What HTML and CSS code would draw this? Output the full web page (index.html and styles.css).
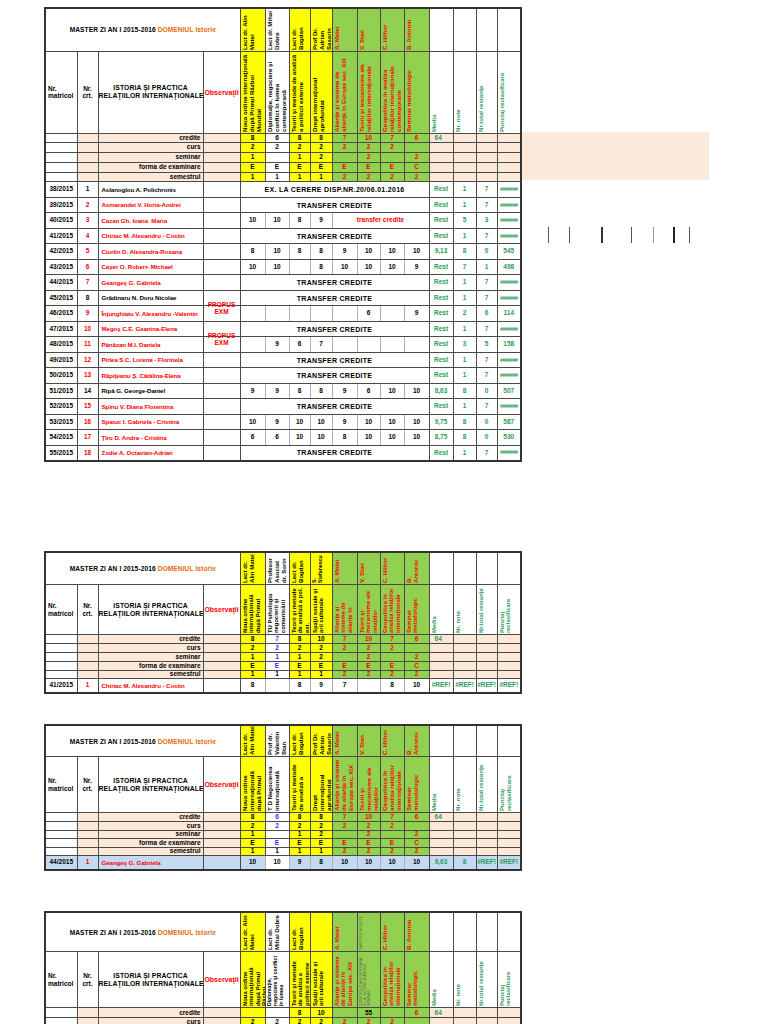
FILE: index.html
```html
<!DOCTYPE html>
<html lang="ro">
<head>
<meta charset="utf-8">
<title>Master ZI An I 2015-2016</title>
<link rel="stylesheet" href="styles.css">
</head>
<body>
<div class="page">

<div class="first">
<table class="sheet t1">
<colgroup>
<col class="w32"><col class="w21"><col class="w105"><col class="w37">
<col class="w25"><col class="w24"><col class="w21"><col class="w22">
<col class="w25"><col class="w23"><col class="w24"><col class="w25">
<col class="w24"><col class="w23"><col class="w21"><col class="w24">
</colgroup>
<tr class="hr1">
<td colspan="4" class="title">MASTER ZI AN I 2015-2016 <span class="or">DOMENIUL Istorie</span></td>
<td class="y hb"><div class="rot">Lect dr. Alin Matei</div></td>
<td class="hb"><div class="rot">Lect dr. Mihai Dobre</div></td>
<td class="y hb"><div class="rot">Lect dr. Bogdan</div></td>
<td class="y hb"><div class="rot">Prof Dr. Adrian Sasarin</div></td>
<td class="g hb r"><div class="rot">A. Matei</div></td>
<td class="g hb r"><div class="rot">V. Stan</div></td>
<td class="g hb r"><div class="rot">C. Hlihor</div></td>
<td class="g hb r"><div class="rot">B. Antoniu</div></td>
<td></td><td></td><td></td><td></td>
</tr>
<tr class="hr2">
<td class="lbl-l">Nr.<br>matricol</td>
<td class="lbl">Nr.<br>crt.</td>
<td class="big">ISTORIA ŞI PRACTICA<br>RELAŢIILOR INTERNAŢIONALE</td>
<td class="obs-h">Observaţii</td>
<td class="y hb"><div class="rot">Noua ordine internaţională după Primul Război Mondial</div></td>
<td class="hb"><div class="rot">Diplomaţie, negociere şi conflict în lumea contemporană</div></td>
<td class="y hb"><div class="rot">Teorii şi metode de analiză a politicii externe</div></td>
<td class="y hb"><div class="rot">Drept internaţional aprofundat</div></td>
<td class="g hb r"><div class="rot">Alianţe şi sisteme de alianţe în Europa sec. XIX</div></td>
<td class="g hb r"><div class="rot">Teorii şi mecanisme ale relaţiilor internaţionale</div></td>
<td class="g hb r"><div class="rot">Geopolitica în analiza relaţiilor internaţionale contemporane</div></td>
<td class="g hb r"><div class="rot">Seminar metodologic</div></td>
<td class="hb gt"><div class="rot">Media</div></td>
<td class="hb gt"><div class="rot">Nr. note</div></td>
<td class="hb gt"><div class="rot">Nr.total restanţe</div></td>
<td class="hb gt"><div class="rot">Punctaj reclasificare</div></td>
</tr>
<tr class="cr"><td></td><td class="p"></td><td class="p cl">credite</td><td class="p"></td>
<td class="y">8</td><td>6</td><td class="y">8</td><td class="y">8</td><td class="g r">7</td><td class="g r">10</td><td class="g r">7</td><td class="g r">6</td>
<td class="p gt ml">64</td><td class="p"></td><td class="p"></td><td class="p"></td></tr>
<tr class="cr"><td></td><td class="p"></td><td class="p cl">curs</td><td class="p"></td>
<td class="y">2</td><td>2</td><td class="y">2</td><td class="y">2</td><td class="g r">2</td><td class="g r">2</td><td class="g r">2</td><td class="g r"></td>
<td class="p"></td><td class="p"></td><td class="p"></td><td class="p"></td></tr>
<tr class="cr"><td></td><td class="p"></td><td class="p cl">seminar</td><td class="p"></td>
<td class="y">1</td><td></td><td class="y">1</td><td class="y">2</td><td class="g r"></td><td class="g r">2</td><td class="g r"></td><td class="g r">2</td>
<td class="p"></td><td class="p"></td><td class="p"></td><td class="p"></td></tr>
<tr class="cr"><td></td><td class="p"></td><td class="p cl">forma de examinare</td><td class="p"></td>
<td class="y">E</td><td>E</td><td class="y">E</td><td class="y">E</td><td class="g r">E</td><td class="g r">E</td><td class="g r">E</td><td class="g r">C</td>
<td class="p"></td><td class="p"></td><td class="p"></td><td class="p"></td></tr>
<tr class="cr"><td></td><td class="p"></td><td class="p cl">semestrul</td><td class="p"></td>
<td class="y">1</td><td>1</td><td class="y">1</td><td class="y">1</td><td class="g r">2</td><td class="g r">2</td><td class="g r">2</td><td class="g r">2</td>
<td class="p"></td><td class="p"></td><td class="p"></td><td class="p"></td></tr>

<tr class="dr"><td>38/2015</td><td>1</td><td class="name">Aslanoglou A. Polichronis</td><td></td><td colspan="8" class="tc">EX. LA CERERE DISP.NR.20/06.01.2016</td><td class="gt">Rest</td><td class="gt">1</td><td class="gt">7</td><td class="gt hash">########</td></tr>
<tr class="dr"><td>39/2015</td><td class="r">2</td><td class="name r">Asmarandei V. Horia-Andrei</td><td></td><td colspan="8" class="tc">TRANSFER CREDITE</td><td class="gt">Rest</td><td class="gt">1</td><td class="gt">7</td><td class="gt hash">########</td></tr>
<tr class="dr"><td>40/2015</td><td class="r">3</td><td class="name r">Cazan Gh. Ioana &nbsp;Maria</td><td></td><td class="c">10</td><td class="c">10</td><td class="c">8</td><td class="c">9</td><td colspan="4" class="tc r small">transfer credite</td><td class="gt">Rest</td><td class="gt">5</td><td class="gt">3</td><td class="gt hash">########</td></tr>
<tr class="dr"><td>41/2015</td><td class="r">4</td><td class="name r">Chiriac M. Alexandru - Costin</td><td></td><td colspan="8" class="tc">TRANSFER CREDITE</td><td class="gt">Rest</td><td class="gt">1</td><td class="gt">7</td><td class="gt hash">########</td></tr>
<tr class="dr"><td>42/2015</td><td class="r">5</td><td class="name r">Ciurlin D. Alexandra-Roxana</td><td></td><td class="c">8</td><td class="c">10</td><td class="c">8</td><td class="c">8</td><td class="c">9</td><td class="c">10</td><td class="c">10</td><td>10</td><td class="gt">9,13</td><td class="gt">8</td><td class="gt">0</td><td class="gt">545</td></tr>
<tr class="dr"><td>43/2015</td><td class="r">6</td><td class="name r">Cayer O. Robert- Michael</td><td></td><td class="c">10</td><td class="c">10</td><td class="c"></td><td class="c">8</td><td class="c">10</td><td class="c">10</td><td class="c">10</td><td>9</td><td class="gt">Rest</td><td class="gt">7</td><td class="gt">1</td><td class="gt">498</td></tr>
<tr class="dr"><td>44/2015</td><td class="r">7</td><td class="name r">Geangeş G. Gabriela</td><td></td><td colspan="8" class="tc">TRANSFER CREDITE</td><td class="gt">Rest</td><td class="gt">1</td><td class="gt">7</td><td class="gt hash">########</td></tr>
<tr class="dr"><td>45/2015</td><td>8</td><td class="name">Grădinaru N. Doru Nicolae</td><td></td><td colspan="8" class="tc">TRANSFER CREDITE</td><td class="gt">Rest</td><td class="gt">1</td><td class="gt">7</td><td class="gt hash">########</td></tr>
<tr class="dr"><td>46/2015</td><td class="r">9</td><td class="name r">Înjunghiatu V. Alexandru -Valentin</td><td class="obs r"><div class="prop">PROPUS<br>EXM</div></td><td class="c"></td><td class="c"></td><td class="c"></td><td class="c"></td><td class="c"></td><td class="c">6</td><td class="c"></td><td>9</td><td class="gt">Rest</td><td class="gt">2</td><td class="gt">6</td><td class="gt">114</td></tr>
<tr class="dr"><td>47/2015</td><td class="r">10</td><td class="name r">Megoş C.E. Geanina-Elena</td><td></td><td colspan="8" class="tc">TRANSFER CREDITE</td><td class="gt">Rest</td><td class="gt">1</td><td class="gt">7</td><td class="gt hash">########</td></tr>
<tr class="dr"><td>48/2015</td><td class="r">11</td><td class="name r">Pânăzan M.I. Daniela</td><td class="obs r"><div class="prop">PROPUS<br>EXM</div></td><td class="c"></td><td class="c">9</td><td class="c">6</td><td class="c">7</td><td class="c"></td><td class="c"></td><td class="c"></td><td></td><td class="gt">Rest</td><td class="gt">3</td><td class="gt">5</td><td class="gt">158</td></tr>
<tr class="dr"><td>49/2015</td><td class="r">12</td><td class="name r">Pîrlea S.C. Lorena - Florinela</td><td></td><td colspan="8" class="tc">TRANSFER CREDITE</td><td class="gt">Rest</td><td class="gt">1</td><td class="gt">7</td><td class="gt hash">########</td></tr>
<tr class="dr"><td>50/2015</td><td class="r">13</td><td class="name r">Răpiţeanu Ş. Cătălina-Elena</td><td></td><td colspan="8" class="tc">TRANSFER CREDITE</td><td class="gt">Rest</td><td class="gt">1</td><td class="gt">7</td><td class="gt hash">########</td></tr>
<tr class="dr"><td>51/2015</td><td>14</td><td class="name">Ripă G. George-Daniel</td><td></td><td class="c">9</td><td class="c">9</td><td class="c">8</td><td class="c">8</td><td class="c">9</td><td class="c">6</td><td class="c">10</td><td>10</td><td class="gt">8,63</td><td class="gt">8</td><td class="gt">0</td><td class="gt">507</td></tr>
<tr class="dr"><td>52/2015</td><td class="r">15</td><td class="name r">Spînu V. Diana Florentina</td><td></td><td colspan="8" class="tc">TRANSFER CREDITE</td><td class="gt">Rest</td><td class="gt">1</td><td class="gt">7</td><td class="gt hash">########</td></tr>
<tr class="dr"><td>53/2015</td><td class="r">16</td><td class="name r">Spaiuc I. Gabriela - Cristina</td><td></td><td class="c">10</td><td class="c">9</td><td class="c">10</td><td class="c">10</td><td class="c">9</td><td class="c">10</td><td class="c">10</td><td>10</td><td class="gt">9,75</td><td class="gt">8</td><td class="gt">0</td><td class="gt">587</td></tr>
<tr class="dr"><td>54/2015</td><td class="r">17</td><td class="name r">Ţîru D. Andra - Cristina</td><td></td><td class="c">6</td><td class="c">6</td><td class="c">10</td><td class="c">10</td><td class="c">8</td><td class="c">10</td><td class="c">10</td><td>10</td><td class="gt">8,75</td><td class="gt">8</td><td class="gt">0</td><td class="gt">530</td></tr>
<tr class="dr"><td>55/2015</td><td class="r">18</td><td class="name r">Zodie A. Octavian-Adrian</td><td></td><td colspan="8" class="tc">TRANSFER CREDITE</td><td class="gt">Rest</td><td class="gt">1</td><td class="gt">7</td><td class="gt hash">########</td></tr>
</table>

<div class="side">
<div class="side-gap"></div>
<div class="band"></div>
<div class="ticks"><span class="tick"></span><span class="tick"></span><span class="tick"></span><span class="tick"></span><span class="tick"></span><span class="tick"></span><span class="tick"></span></div>
</div>
</div>

<table class="sheet t2">
<colgroup>
<col class="w32"><col class="w21"><col class="w105"><col class="w37">
<col class="w25"><col class="w24"><col class="w21"><col class="w22">
<col class="w25"><col class="w23"><col class="w24"><col class="w25">
<col class="w24"><col class="w23"><col class="w21"><col class="w24">
</colgroup>
<tr class="hr1">
<td colspan="4" class="title">MASTER ZI AN I 2015-2016 <span class="or">DOMENIUL Istorie</span></td>
<td class="y hb"><div class="rot">Lect dr. Alin Matei</div></td>
<td class="hb"><div class="rot">Profesor Asociat dr. Sorin</div></td>
<td class="y hb"><div class="rot">Lect dr. Bogdan</div></td>
<td class="y hb fit"><div class="rot">S. Stefanescu</div></td>
<td class="g hb r"><div class="rot">A. Matei</div></td>
<td class="g hb r"><div class="rot">V. Stan</div></td>
<td class="g hb r"><div class="rot">C. Hlihor</div></td>
<td class="g hb r"><div class="rot">B. Antoniu</div></td>
<td></td><td></td><td></td><td></td>
</tr>
<tr class="hr2">
<td class="lbl-l">Nr.<br>matricol</td>
<td class="lbl">Nr.<br>crt.</td>
<td class="big">ISTORIA ŞI PRACTICA<br>RELAŢIILOR INTERNAŢIONALE</td>
<td class="obs-h">Observaţii</td>
<td class="y hb"><div class="rot">Noua ordine internaţională după Primul</div></td>
<td class="hb"><div class="rot">TU Psihologia negocierii şi comunicării</div></td>
<td class="y hb"><div class="rot">Teorii şi metode de analiză a pol. ext.</div></td>
<td class="y hb"><div class="rot">Spaţii sociale şi arii culturale</div></td>
<td class="g hb r"><div class="rot">Alianţe şi sisteme de alianţe în</div></td>
<td class="g hb r"><div class="rot">Teorii şi mecanisme ale relaţiilor</div></td>
<td class="g hb r"><div class="rot">Geopolitica în analiza relaţiilor internaţionale</div></td>
<td class="g hb r"><div class="rot">Seminar metodologic</div></td>
<td class="hb gt"><div class="rot">Media</div></td>
<td class="hb gt"><div class="rot">Nr. note</div></td>
<td class="hb gt"><div class="rot">Nr.total restanţe</div></td>
<td class="hb gt"><div class="rot">Punctaj reclasificare</div></td>
</tr>
<tr class="cr"><td></td><td class="p"></td><td class="p cl">credite</td><td class="p"></td>
<td class="y">8</td><td class="b">7</td><td class="y">8</td><td class="y">10</td><td class="g r">7</td><td class="g r">10</td><td class="g r">7</td><td class="g r">6</td>
<td class="p gt ml">64</td><td class="p"></td><td class="p"></td><td class="p"></td></tr>
<tr class="cr"><td></td><td class="p"></td><td class="p cl">curs</td><td class="p"></td>
<td class="y">2</td><td class="b">2</td><td class="y">2</td><td class="y">2</td><td class="g r">2</td><td class="g r">2</td><td class="g r">2</td><td class="g r"></td>
<td class="p"></td><td class="p"></td><td class="p"></td><td class="p"></td></tr>
<tr class="cr"><td></td><td class="p"></td><td class="p cl">seminar</td><td class="p"></td>
<td class="y">1</td><td class="b">1</td><td class="y">1</td><td class="y">2</td><td class="g r"></td><td class="g r">2</td><td class="g r"></td><td class="g r">2</td>
<td class="p"></td><td class="p"></td><td class="p"></td><td class="p"></td></tr>
<tr class="cr"><td></td><td class="p"></td><td class="p cl">forma de examinare</td><td class="p"></td>
<td class="y">E</td><td class="b">E</td><td class="y">E</td><td class="y">E</td><td class="g r">E</td><td class="g r">E</td><td class="g r">E</td><td class="g r">C</td>
<td class="p"></td><td class="p"></td><td class="p"></td><td class="p"></td></tr>
<tr class="cr"><td></td><td class="p"></td><td class="p cl">semestrul</td><td class="p"></td>
<td class="y">1</td><td>1</td><td class="y">1</td><td class="y">1</td><td class="g r">2</td><td class="g r">2</td><td class="g r">2</td><td class="g r">2</td>
<td class="p"></td><td class="p"></td><td class="p"></td><td class="p"></td></tr>
<tr class="dr"><td>41/2015</td><td class="r">1</td><td class="name r">Chiriac M. Alexandru - Costin</td><td></td><td class="c">8</td><td class="c"></td><td class="c">8</td><td class="c">9</td><td class="c">7</td><td class="c"></td><td class="c">8</td><td>10</td><td class="gt">#REF!</td><td class="gt">#REF!</td><td class="gt">#REF!</td><td class="gt">#REF!</td></tr>
</table>

<table class="sheet t3">
<colgroup>
<col class="w32"><col class="w21"><col class="w105"><col class="w37">
<col class="w25"><col class="w24"><col class="w21"><col class="w22">
<col class="w25"><col class="w23"><col class="w24"><col class="w25">
<col class="w24"><col class="w23"><col class="w21"><col class="w24">
</colgroup>
<tr class="hr1">
<td colspan="4" class="title">MASTER ZI AN I 2015-2016 <span class="or">DOMENIUL Istorie</span></td>
<td class="y hb"><div class="rot">Lect dr. Alin Matei</div></td>
<td class="hb"><div class="rot">Prof dr. Valentin Stan</div></td>
<td class="y hb"><div class="rot">Lect dr. Bogdan</div></td>
<td class="y hb"><div class="rot">Prof Dr. Adrian Sasarin</div></td>
<td class="g hb r"><div class="rot">A. Matei</div></td>
<td class="g hb r"><div class="rot">V. Stan</div></td>
<td class="g hb r"><div class="rot">C. Hlihor</div></td>
<td class="g hb r"><div class="rot">B. Antoniu</div></td>
<td></td><td></td><td></td><td></td>
</tr>
<tr class="hr2">
<td class="lbl-l">Nr.<br>matricol</td>
<td class="lbl">Nr.<br>crt.</td>
<td class="big">ISTORIA ŞI PRACTICA<br>RELAŢIILOR INTERNAŢIONALE</td>
<td class="obs-h">Observaţii</td>
<td class="y hb"><div class="rot">Noua ordine internaţională după Primul</div></td>
<td class="hb"><div class="rot">T D Negocierea internaţională</div></td>
<td class="y hb"><div class="rot">Teorii şi metode de analiză a</div></td>
<td class="y hb"><div class="rot">Drept internaţional aprofundat</div></td>
<td class="g hb r"><div class="rot">Alianţe şi sisteme de alianţe în Europa sec. XIX</div></td>
<td class="g hb r"><div class="rot">Teorii şi mecanisme ale relaţiilor</div></td>
<td class="g hb r"><div class="rot">Geopolitica în analiza relaţiilor internaţionale</div></td>
<td class="g hb r"><div class="rot">Seminar metodologic</div></td>
<td class="hb gt"><div class="rot">Media</div></td>
<td class="hb gt"><div class="rot">Nr. note</div></td>
<td class="hb gt"><div class="rot">Nr.total restanţe</div></td>
<td class="hb gt"><div class="rot">Punctaj reclasificare</div></td>
</tr>
<tr class="cr"><td></td><td class="p"></td><td class="p cl">credite</td><td class="p"></td>
<td class="y">8</td><td class="b">6</td><td class="y">8</td><td class="y">8</td><td class="g r">7</td><td class="g r">10</td><td class="g r">7</td><td class="g r">6</td>
<td class="p gt ml">64</td><td class="p"></td><td class="p"></td><td class="p"></td></tr>
<tr class="cr"><td></td><td class="p"></td><td class="p cl">curs</td><td class="p"></td>
<td class="y">2</td><td class="b">2</td><td class="y">2</td><td class="y">2</td><td class="g r">2</td><td class="g r">2</td><td class="g r">2</td><td class="g r"></td>
<td class="p"></td><td class="p"></td><td class="p"></td><td class="p"></td></tr>
<tr class="cr"><td></td><td class="p"></td><td class="p cl">seminar</td><td class="p"></td>
<td class="y">1</td><td></td><td class="y">1</td><td class="y">2</td><td class="g r"></td><td class="g r">2</td><td class="g r"></td><td class="g r">2</td>
<td class="p"></td><td class="p"></td><td class="p"></td><td class="p"></td></tr>
<tr class="cr"><td></td><td class="p"></td><td class="p cl">forma de examinare</td><td class="p"></td>
<td class="y">E</td><td class="b">E</td><td class="y">E</td><td class="y">E</td><td class="g r">E</td><td class="g r">E</td><td class="g r">E</td><td class="g r">C</td>
<td class="p"></td><td class="p"></td><td class="p"></td><td class="p"></td></tr>
<tr class="cr"><td></td><td class="p"></td><td class="p cl">semestrul</td><td class="p"></td>
<td class="y">1</td><td>1</td><td class="y">1</td><td class="y">1</td><td class="g r">2</td><td class="g r">2</td><td class="g r">2</td><td class="g r">2</td>
<td class="p"></td><td class="p"></td><td class="p"></td><td class="p"></td></tr>
<tr class="dr blue"><td>44/2015</td><td class="r">1</td><td class="name r">Geangeş G. Gabriela</td><td></td><td class="c">10</td><td class="c wcell">10</td><td class="c">9</td><td class="c">8</td><td class="c">10</td><td class="c">10</td><td class="c">10</td><td>10</td><td class="gt">9,63</td><td class="gt">8</td><td class="gt">#REF!</td><td class="gt">#REF!</td></tr>
</table>

<table class="sheet t4">
<colgroup>
<col class="w32"><col class="w21"><col class="w105"><col class="w37">
<col class="w25"><col class="w24"><col class="w21"><col class="w22">
<col class="w25"><col class="w23"><col class="w24"><col class="w25">
<col class="w24"><col class="w23"><col class="w21"><col class="w24">
</colgroup>
<tr class="hr1">
<td colspan="4" class="title">MASTER ZI AN I 2015-2016 <span class="or">DOMENIUL Istorie</span></td>
<td class="y hb"><div class="rot">Lect dr. Alin Matei</div></td>
<td class="hb"><div class="rot">Lect dr. Mihai Dobre</div></td>
<td class="y hb"><div class="rot">Lect dr. Bogdan</div></td>
<td class="y hb"><div class="rot"></div></td>
<td class="g hb r"><div class="rot">A. Matei</div></td>
<td class="g hb tiny"><div class="rot">CAPITOLE SELECTE</div></td>
<td class="g hb r"><div class="rot">C. Hlihor</div></td>
<td class="g hb r"><div class="rot">B. Antoniu</div></td>
<td></td><td></td><td></td><td></td>
</tr>
<tr class="hr2">
<td class="lbl-l">Nr.<br>matricol</td>
<td class="lbl">Nr.<br>crt.</td>
<td class="big">ISTORIA ŞI PRACTICA<br>RELAŢIILOR INTERNAŢIONALE</td>
<td class="obs-h">Observaţii</td>
<td class="y hb"><div class="rot">Noua ordine internaţională după Primul Război</div></td>
<td class="hb fit"><div class="rot">Diplomaţie, negociere şi conflict în lumea</div></td>
<td class="y hb"><div class="rot">Teorii şi metode de analiza a politicii externe</div></td>
<td class="y hb"><div class="rot">Spaţii sociale şi arii culturale</div></td>
<td class="g hb r"><div class="rot">Alianţe şi sisteme de alianţe în Europa sec. XIX</div></td>
<td class="g hb tiny"><div class="rot">CONSTRUCŢIA EUROPEANĂ S.L.A. ISTORIE ŞI ARHIVE SEMINAR</div></td>
<td class="g hb r"><div class="rot">Geopolitica în analiza relaţiilor internaţionale</div></td>
<td class="g hb r"><div class="rot">Seminar metodologic</div></td>
<td class="hb gt"><div class="rot">Media</div></td>
<td class="hb gt"><div class="rot">Nr. note</div></td>
<td class="hb gt"><div class="rot">Nr.total restanţe</div></td>
<td class="hb gt"><div class="rot">Punctaj reclasificare</div></td>
</tr>
<tr class="cr"><td></td><td class="p"></td><td class="p cl">credite</td><td class="p"></td>
<td class="y"></td><td></td><td class="y">8</td><td class="y">10</td><td class="g r"></td><td class="g">55</td><td class="g r"></td><td class="g r">6</td>
<td class="p gt ml">64</td><td class="p"></td><td class="p"></td><td class="p"></td></tr>
<tr class="cr"><td></td><td class="p"></td><td class="p cl">curs</td><td class="p"></td>
<td class="y">2</td><td>2</td><td class="y">2</td><td class="y">2</td><td class="g r">2</td><td class="g r">2</td><td class="g r">2</td><td class="g r"></td>
<td class="p"></td><td class="p"></td><td class="p"></td><td class="p"></td></tr>
</table>

</div>
</body>
</html>
```

FILE: styles.css
```css
* { box-sizing: border-box; }
html, body { margin: 0; padding: 0; background: #fff; }
body {
  font-family: "Liberation Sans Narrow", "Arial Narrow", "Liberation Sans", Arial, sans-serif;
  color: #000;
  overflow: hidden;
}
.page {
  padding: 7px 0 0 44px;
  display: flex;
  flex-direction: column;
}
.first { display: flex; align-items: flex-start; }
.side { width: 187px; display: flex; flex-direction: column; }
.side-gap { height: 125px; }
.band { height: 48px; background: #fde9d9; }
.ticks { margin-top: 47px; height: 16px; display: flex; }
.tick { width: 1px; height: 16px; background: #555; }
.tick:nth-child(1) { margin-left: 26px; }
.tick:nth-child(2) { margin-left: 20px; }
.tick:nth-child(3) { margin-left: 31px; width: 2px; background: #333; }
.tick:nth-child(4) { margin-left: 28px; }
.tick:nth-child(5) { margin-left: 21px; background: #999; }
.tick:nth-child(6) { margin-left: 19px; width: 2px; background: #222; }
.tick:nth-child(7) { margin-left: 14px; }

.sheet {
  border-collapse: collapse;
  table-layout: fixed;
  width: 476px;
  border: 2px solid #333;
}
.t2 { margin-top: 89px; }
.t3 { margin-top: 30px; }
.t4 { margin-top: 40px; }
.w32 { width: 32px; } .w21 { width: 21px; } .w105 { width: 105px; } .w37 { width: 37px; }
.w25 { width: 25px; } .w24 { width: 24px; } .w22 { width: 22px; } .w23 { width: 23px; }

.sheet td {
  border: 1px solid #4a4a4a;
  padding: 0;
  font-size: 6.5px;
  font-weight: bold;
  text-align: center;
  vertical-align: middle;
  overflow: hidden;
  white-space: nowrap;
  line-height: 1;
}
.sheet td.y { background: #ffff00; }
.sheet td.g { background: #92d050; }
.sheet td.p { background: #fde9d9; }
.sheet td.r { color: #ff0000; }
.sheet td.b { color: #3030ff; }
.sheet td.gt { color: #2e9a5a; }
.or { color: #e46c0a; }

.sheet td.title { font-size: 6.6px; letter-spacing: 0.1px; padding-top: 2px; }
.sheet td.hb { vertical-align: bottom; padding: 0 0 1px 1px; }
.rot {
  writing-mode: vertical-rl;
  transform: rotate(180deg);
  white-space: normal;
  text-align: left;
  line-height: 6.8px;
  font-size: 6.1px;
  width: 100%;
  overflow: hidden;
}
.t2 .hr2 .rot, .t4 .hr2 .rot { line-height: 6.4px; font-size: 5.9px; }
.sheet td.fit .rot { font-size: 5.2px; line-height: 5.8px; }
.sheet td.tiny .rot { font-size: 3.5px; line-height: 4px; color: #555; font-weight: normal; }
.sheet td.lbl-l { text-align: left; padding-left: 2px; white-space: normal; line-height: 7.5px; }
.sheet td.lbl { white-space: normal; line-height: 7.5px; }
.sheet td.big { font-size: 6.8px; letter-spacing: 0.1px; line-height: 8px; }
.sheet td.obs-h { color: #ff0000; font-size: 7px; }

.sheet td.cl { text-align: right; padding-right: 2px; }
.sheet td.ml { text-align: left; padding-left: 5px; }

.sheet td.name { text-align: left; padding-left: 3px; font-size: 6.2px; letter-spacing: -0.1px; }
.sheet td.tc { font-size: 7px; letter-spacing: 0.3px; }
.sheet td.small { font-size: 6.5px; letter-spacing: 0; }
.sheet .dr td.c { border-right-color: #b0b0b0; }
.sheet td.hash { font-size: 5px; letter-spacing: -0.6px; }
.sheet td.obs { vertical-align: top; overflow: visible; }
.prop { line-height: 7px; margin-top: -5px; font-size: 6.5px; }
.sheet .blue td { background: #c5d9f1; }
.sheet .blue td.wcell { background: #fff; }

.t1 .hr1 { height: 43px; }
.t1 .hr1 .rot { height: 40px; }
.t1 .hr2 { height: 82px; }
.t1 .hr2 .rot { height: 79px; }
.t1 .cr { height: 9.8px; }
.t1 .dr { height: 15.5px; }

.t2 .hr1 { height: 33px; }
.t2 .hr1 .rot { height: 30px; }
.t2 .hr2 { height: 50px; }
.t2 .hr2 .rot { height: 47px; }
.t2 .cr { height: 8.8px; }
.t2 .dr { height: 14px; }

.t3 .hr1 { height: 32px; }
.t3 .hr1 .rot { height: 29px; }
.t3 .hr2 { height: 56px; }
.t3 .hr2 .rot { height: 53px; }
.t3 .cr { height: 8.6px; }
.t3 .dr { height: 14px; }

.t4 .hr1 { height: 40px; }
.t4 .hr1 .rot { height: 37px; }
.t4 .hr2 { height: 56px; }
.t4 .hr2 .rot { height: 53px; }
.t4 .cr { height: 10px; }
```
